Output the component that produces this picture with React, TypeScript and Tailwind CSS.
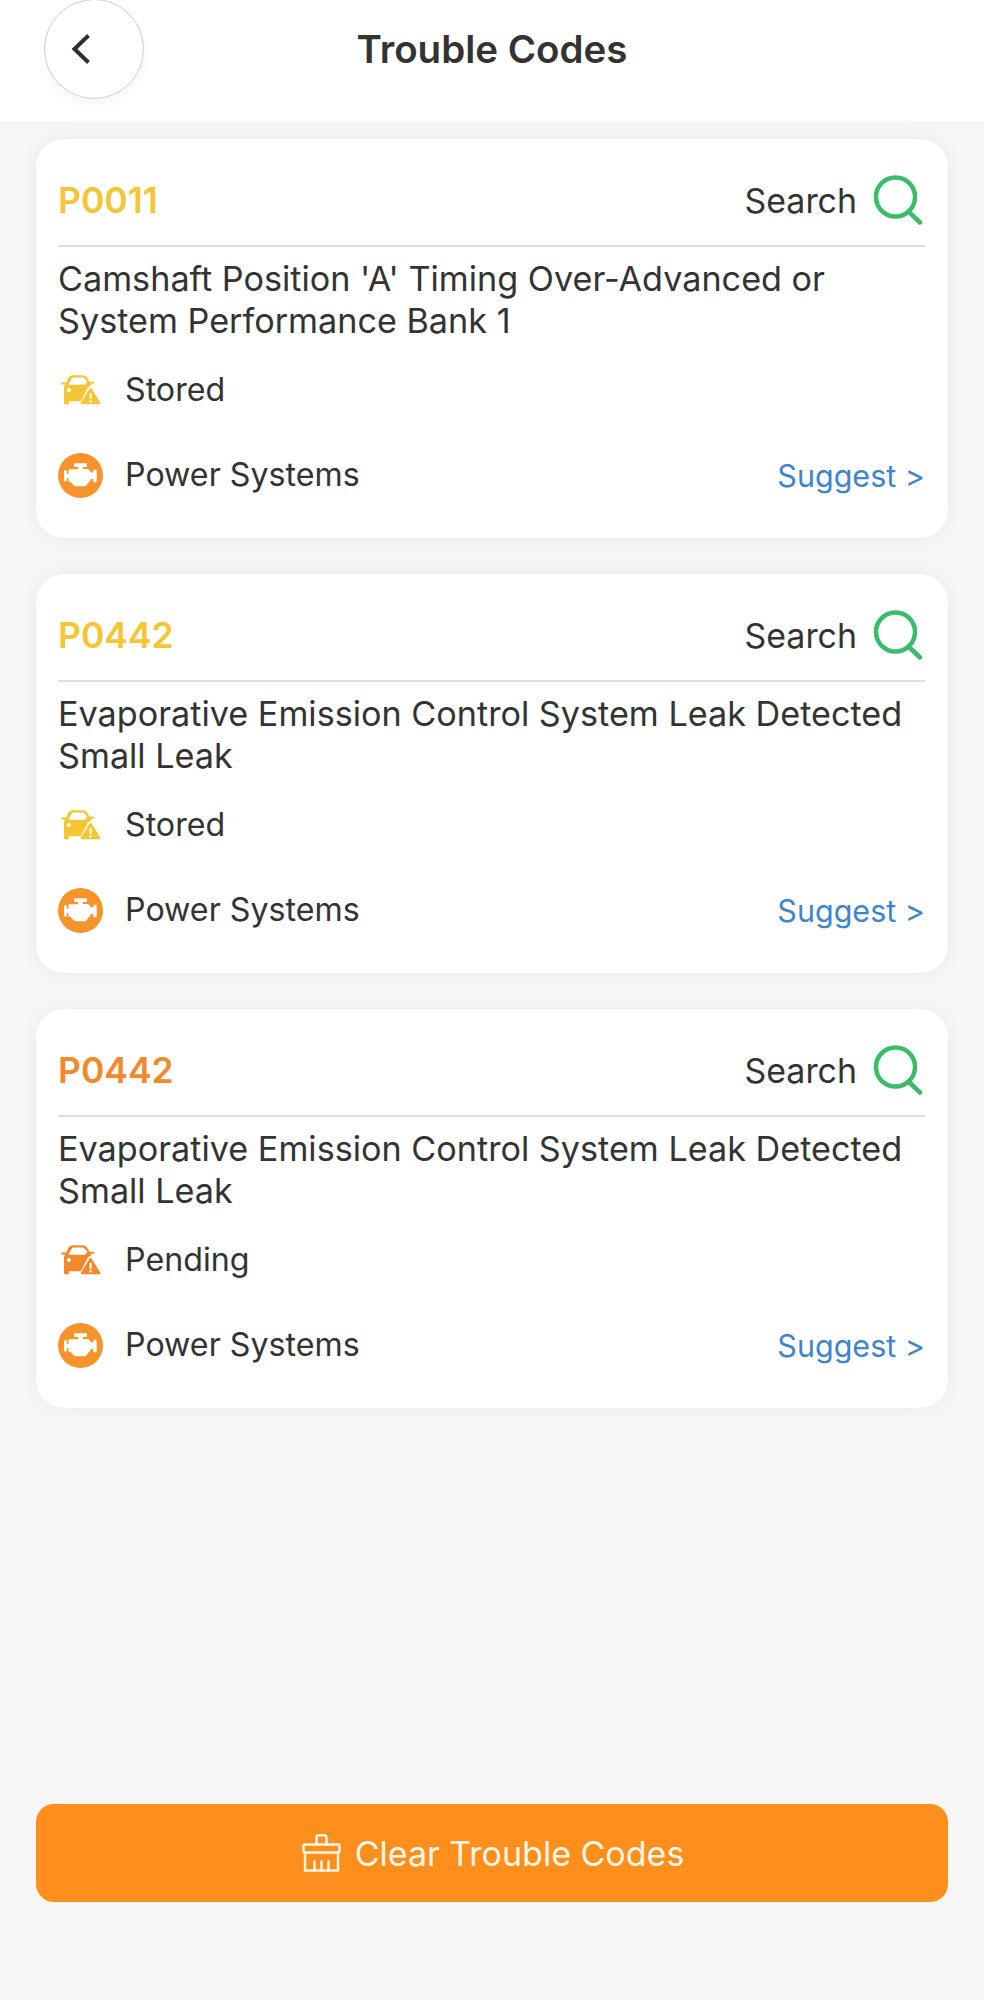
import React from "react";

const Car = ({ color }: { color: string }) => (
  <svg width="40" height="30" viewBox="0 0 40 30" className="shrink-0">
    <path fill={color} d="M7.500 2.500C8.500 1 10 .3 12 .3h9.500c2 0 3.500.7 4.500 2.200l2.500 4.200H32c.9 0 1.300.4 1.300 1s-.5 1-1.400 1h-2.400l1 1.500-3.500 2-7 14H8v1.600c0 1-.6 1.600-1.600 1.600H4.600c-1 0-1.600-.6-1.600-1.600V13c0-1.300.4-2.400 1.300-3.400H1.300C.5 9.600 0 9.200 0 8.600s.4-1 1.300-1h3.900z" />
    <path fill="#fff" d="M7.800 9l3-5.400c.4-.7 1-1 1.800-1h8.800c.9 0 1.600.3 2 1L26.300 6.500 24 9.800H8.200z" />
    <circle cx="7.800" cy="15" r="2" fill="#fff" />
    <path fill="#fff" d="M29.500 11L17.500 30h23z" />
    <path fill={color} d="M28.600 13.500c.5-.8 1.500-.8 2 0l8.600 14c.5.800 0 1.800-1 1.800H21c-1 0-1.500-1-1-1.800z" />
    <rect x="28.600" y="17.800" width="2" height="6.500" rx="1" fill="#fff" />
    <circle cx="29.600" cy="26.400" r="1.200" fill="#fff" />
  </svg>
);

const Engine = () => (
  <div className="w-[45px] h-[45px] rounded-full bg-[#f6932b] flex items-center justify-center shrink-0">
    <svg width="33" height="25" viewBox="0 0 32 24">
      <path fill="#fff" d="M11 0h10c.8 0 1.300.5 1.300 1.300v1.200c0 .8-.5 1.300-1.300 1.300h-2.800v2h5.200l3.200 3.200h1.800V7.700c0-.8.5-1.200 1.200-1.200h.8c.8 0 1.300.5 1.300 1.200v9.600c0 .8-.5 1.200-1.300 1.200h-.8c-.7 0-1.200-.4-1.200-1.200v-1.800h-1.800L21 22.500H10.500L6 18H4.300v-3.500H2.800v2c0 .8-.5 1.200-1.300 1.200H1.300C.5 17.700 0 17.200 0 16.500V8c0-.8.5-1.200 1.300-1.200h.2c.8 0 1.300.4 1.300 1.200v2.500h1.500V7.300c0-.7.5-1.300 1.300-1.300h8.200V3.800H11c-.8 0-1.300-.5-1.300-1.300V1.300C9.700.5 10.200 0 11 0z" />
    </svg>
  </div>
);

const SearchIcon = () => (
  <svg width="50" height="50" viewBox="0 0 50 50" className="shrink-0" fill="none" stroke="#3dbb6c" strokeWidth="4.500" strokeLinecap="round">
    <circle cx="22.500" cy="22" r="19.500" />
    <path d="M35.500 36.500L47 47.500" />
  </svg>
);

const Broom = () => (
  <svg width="39" height="38" viewBox="0 0 39 38" fill="none" stroke="#fff6e8" strokeWidth="2.400" strokeLinejoin="round" strokeLinecap="round" className="shrink-0">
    <path d="M14.500 10.500V3.500c0-1.300 1-2.200 2.300-2.200h5.400c1.300 0 2.300.9 2.300 2.200v7" />
    <path d="M3 10.500h33c.8 0 1.500.7 1.500 1.500v5c0 .8-.7 1.500-1.500 1.500H3c-.8 0-1.500-.7-1.500-1.500v-5c0-.8.7-1.500 1.500-1.500z" />
    <path d="M3 18.500v18h33v-18" />
    <path d="M12.500 36.500v-9M19.500 36.500v-9M26.500 36.500v-9" />
  </svg>
);

const Card = ({
  code,
  desc1,
  desc2,
  status,
  color,
}: {
  code: string;
  desc1: string;
  desc2: string;
  status: string;
  color: string;
}) => (
  <section className="h-[399px] bg-white rounded-[28px] pl-[22px] pr-[23px] shadow-[0_0_18px_rgba(0,0,0,0.05)]">
    <div className="h-[108px] pt-[17px] flex items-center justify-between border-b-2 border-[#dfdfdf]">
      <span className="pt-[1px] text-[35.500px] font-semibold" style={{ color }}>
        {code}
      </span>
      <span className="flex items-center gap-[16px] pr-[2px]">
        <span className="pt-[2px] text-[33.900px] text-[#333333]">Search</span>
        <SearchIcon />
      </span>
    </div>
    <p className="mt-[11px] text-[34.200px] leading-[42px] text-[#333333]">
      {desc1}
      <br />
      {desc2}
    </p>
    <div className="mt-[23px] h-[50px] flex items-center">
      <span className="w-[67px] flex items-center pl-[3px]">
        <Car color={color} />
      </span>
      <span className="pt-[1px] text-[32.200px] text-[#333333]">{status}</span>
    </div>
    <div className="mt-[35px] h-[50px] flex items-center">
      <span className="w-[67px]">
        <Engine />
      </span>
      <span className="pt-[1px] text-[32.200px] text-[#333333]">Power Systems</span>
      <span className="ml-auto pt-[1px] text-[30.500px] text-[#3f85cb]">Suggest &gt;</span>
    </div>
  </section>
);

export default function App() {
  return (
    <div className="w-[984px] h-[2000px] bg-[#f6f6f6] flex flex-col font-['Inter',sans-serif]">
      <header className="h-[121px] bg-white flex items-start relative shrink-0">
        <div className="absolute left-[44px] top-[-1px] w-[100px] h-[100px] rounded-full border border-[#cfcfcf] bg-white shadow-[0_6px_12px_rgba(0,0,0,0.03)] flex items-center">
          <svg width="20" height="32" viewBox="0 0 20 32" fill="none" stroke="#2f2f2f" strokeWidth="4" className="ml-[26px] -mt-[1px]">
            <path d="M17.500 2.500L3.500 16l14 13.500" />
          </svg>
        </div>
        <h1 className="w-full text-center mt-[25px] text-[38.500px] leading-[48px] font-semibold text-[#333333]">Trouble Codes</h1>
      </header>
      <main className="flex flex-col gap-[36px] px-[36px] pt-[18px]">
        <Card code="P0011" desc1="Camshaft Position 'A' Timing Over-Advanced or" desc2="System Performance Bank 1" status="Stored" color="#f4c534" />
        <Card code="P0442" desc1="Evaporative Emission Control System Leak Detected" desc2="Small Leak" status="Stored" color="#f4c534" />
        <Card code="P0442" desc1="Evaporative Emission Control System Leak Detected" desc2="Small Leak" status="Pending" color="#f08a2c" />
      </main>
      <div className="px-[36px] mt-[396px]">
        <button className="w-full h-[98px] rounded-[18px] bg-[#ff8f1c] flex items-center justify-center gap-[14px] pl-[2px] text-[34px] text-[#fff6e8]">
          <Broom />
          Clear Trouble Codes
        </button>
      </div>
    </div>
  );
}
